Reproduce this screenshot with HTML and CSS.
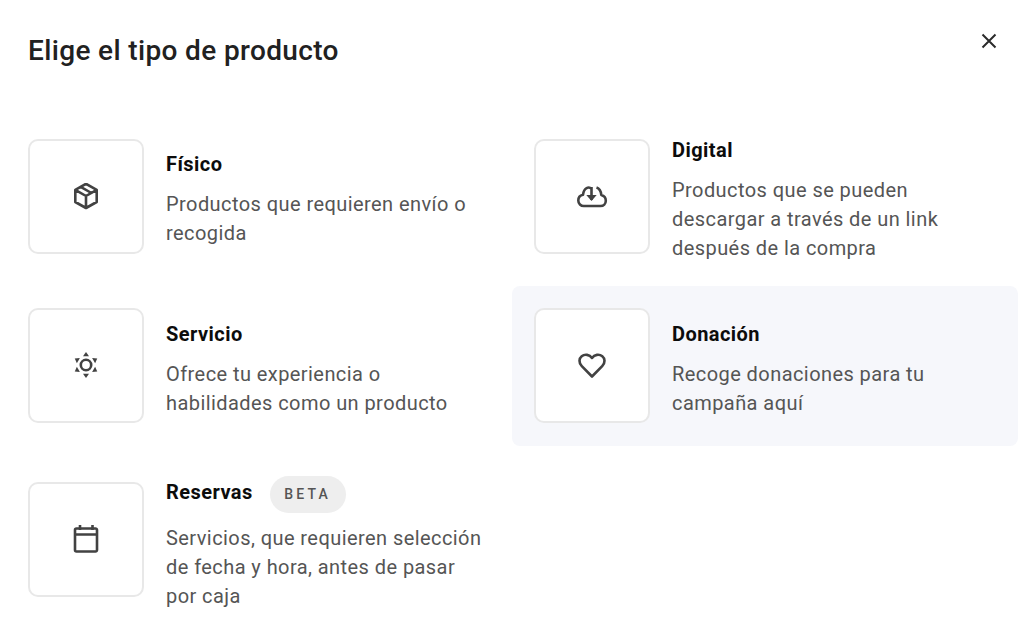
FILE: index.html
```html
<!DOCTYPE html>
<html lang="es">
<head>
<meta charset="utf-8">
<title>Elige el tipo de producto</title>
<link rel="stylesheet" href="styles.css">
</head>
<body>
<div class="dialog">
  <header class="head">
    <h1 class="heading">Elige el tipo de producto</h1>
    <button class="close" aria-label="Cerrar">
      <svg width="20" height="20" viewBox="0 0 20 20"><path d="M3.500 3.500l13 13M16.500 3.500l-13 13"/></svg>
    </button>
  </header>
  <div class="grid">
    <div class="card">
      <div class="tile">
        <svg width="28" height="28" viewBox="0 1 28 28"><path d="M14 1.800l10.700 6v12.200L14 26 3.300 20V7.800zM3.300 7.800L14 14l10.700-6.200M14 14v12M8.700 4.800l10.700 6.200"/></svg>
      </div>
      <div class="text text-tall">
        <div class="name">Físico</div>
        <p class="desc">Productos que requieren envío o recogida</p>
      </div>
    </div>
    <div class="card">
      <div class="tile">
        <svg width="32" height="28" viewBox="0 1 32 28"><path d="M15.500 7C13 4 7.800 5.500 7 12.800 3.800 13.500 2.300 16 2.300 18.500c0 3.200 2.600 5.500 5.400 5.500h16.800c3 0 5.300-2.300 5.300-5.300 0-2.800-2-5-4.500-5.700C25 9.500 23.500 6.500 20.500 5.500M15.500 5v13"/><path class="solid" d="M10.300 13h10.400l-5.200 6z"/></svg>
      </div>
      <div class="text text-tall">
        <div class="name">Digital</div>
        <p class="desc">Productos que se pueden descargar a través de un link después de la compra</p>
      </div>
    </div>
    <div class="card">
      <div class="tile">
        <svg width="28" height="28" viewBox="0 0 28 28">
          <circle cx="14" cy="14" r="5.200"/>
          <g class="solid">
            <path d="M14 1l3 4.200h-6z"/>
            <path d="M14 1l3 4.200h-6z" transform="rotate(60 14 14)"/>
            <path d="M14 1l3 4.200h-6z" transform="rotate(120 14 14)"/>
            <path d="M14 1l3 4.200h-6z" transform="rotate(180 14 14)"/>
            <path d="M14 1l3 4.200h-6z" transform="rotate(240 14 14)"/>
            <path d="M14 1l3 4.200h-6z" transform="rotate(300 14 14)"/>
          </g>
        </svg>
      </div>
      <div class="text">
        <div class="name">Servicio</div>
        <p class="desc">Ofrece tu experiencia o habilidades como un producto</p>
      </div>
    </div>
    <div class="card card-active">
      <div class="tile">
        <svg width="30" height="28" viewBox="0 0 30 28"><path d="M15 25.500L4.800 15.200C1.500 11.800 2 7.500 4.700 5.300 7.800 2.800 12.500 3.400 15 7c2.500-3.600 7.200-4.200 10.300-1.700 2.700 2.200 3.200 6.500-.1 9.900z"/></svg>
      </div>
      <div class="text">
        <div class="name">Donación</div>
        <p class="desc">Recoge donaciones para tu campaña aquí</p>
      </div>
    </div>
    <div class="card">
      <div class="tile">
        <svg width="28" height="32" viewBox="0 0 28 32"><path d="M4.500 5.500h19a1.500 1.500 0 0 1 1.500 1.500v20a1.500 1.500 0 0 1-1.500 1.500h-19A1.500 1.500 0 0 1 3 27V7a1.500 1.500 0 0 1 1.500-1.500zM3 11.500h22M8 2v5M20.500 2v5"/></svg>
      </div>
      <div class="text text-tall">
        <div class="name-row">
          <div class="name">Reservas</div>
          <span class="badge">BETA</span>
        </div>
        <p class="desc desc-badge">Servicios, que requieren selección de fecha y hora, antes de pasar por caja</p>
      </div>
    </div>
  </div>
</div>
</body>
</html>
```

FILE: styles.css
```css
* { box-sizing: border-box; }

html, body {
  margin: 0;
  height: 100%;
  overflow: hidden;
  background: #fff;
}

body {
  font-family: Roboto, "Liberation Sans", sans-serif;
  color: #212121;
}

.dialog {
  padding: 0 6px;
}

.head {
  height: 107.5px;
  padding: 32px 19px 0 22px;
  display: flex;
  justify-content: space-between;
  align-items: flex-start;
}

.heading {
  margin: 0;
  font-size: 28px;
  line-height: 37px;
  font-weight: 500;
  letter-spacing: 0.36px;
  color: #212121;
}

.close {
  margin-top: -1px;
  padding: 0;
  width: 20px;
  height: 20px;
  border: 0;
  background: none;
  display: flex;
}

.close path {
  fill: none;
  stroke: #2b2b2b;
  stroke-width: 2;
}

.grid {
  display: grid;
  grid-template-columns: 506px 506px;
}

.card {
  display: flex;
  align-items: center;
  gap: 22.5px;
  padding: 22px;
  border-radius: 8px;
}

.card-active {
  padding-bottom: 23px;
  margin-bottom: -1px;
  background: #f6f7fb;
}

.tile {
  flex: none;
  width: 115.5px;
  height: 115px;
  display: flex;
  align-items: center;
  justify-content: center;
  background: #fff;
  border: 2px solid #e8e8e8;
  border-radius: 10px;
}

.tile svg {
  display: block;
  fill: none;
  stroke: #424242;
  stroke-width: 2.600;
  stroke-linejoin: round;
}

.tile .solid {
  fill: #424242;
  stroke: none;
}

.text {
  flex: 1;
  margin-top: 10px;
  min-width: 0;
}

.text-tall {
  margin-top: 9px;
  padding-bottom: 1px;
}

.name {
  font-size: 20px;
  line-height: 22px;
  font-weight: 700;
  letter-spacing: 0.45px;
  color: #0c0c0c;
}

.desc {
  margin: 15px 0 0;
  font-size: 20px;
  line-height: 29px;
  letter-spacing: 0.43px;
  color: #555;
  max-width: 322px;
}

.name-row {
  display: flex;
  align-items: flex-start;
  gap: 17px;
}

.name-row .name {
  margin-top: 5px;
}

.badge {
  height: 37px;
  padding: 0 14.500px;
  display: flex;
  align-items: center;
  border-radius: 19px;
  background: #eee;
  font-size: 14px;
  font-weight: 500;
  letter-spacing: 3.200px;
  color: #555;
}

.desc-badge {
  margin-top: 11px;
}
```
